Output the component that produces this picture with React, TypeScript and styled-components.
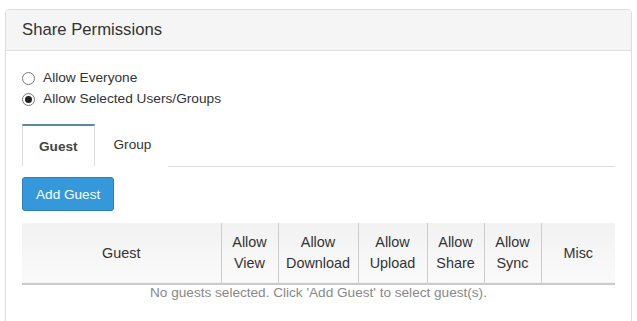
import styled, { createGlobalStyle } from "styled-components";

const GlobalStyle = createGlobalStyle`
  html, body {
    margin: 0;
    padding: 0;
    background: #ffffff;
  }
  body {
    font-family: "Liberation Sans", Arial, sans-serif;
    color: #333333;
  }
`;

const Page = styled.div`
  padding: 9px 5px 0 5px;
`;

const Panel = styled.section`
  border: 1px solid #dddddd;
  border-radius: 4px;
  background: #ffffff;
  box-shadow: 0 1px 1px rgba(0, 0, 0, 0.05);
  min-height: 340px;
`;

const PanelHeader = styled.header`
  height: 40px;
  display: flex;
  align-items: center;
  padding: 0 16px;
  background: #f5f5f5;
  border-bottom: 1px solid #dddddd;
  border-radius: 3px 3px 0 0;
`;

const Title = styled.h3`
  margin: 0;
  font-size: 16.7px;
  font-weight: normal;
  color: #333333;
`;

const PanelBody = styled.div`
  padding: 16px 16px 0 16px;
`;

const RadioGroup = styled.div`
  display: flex;
  flex-direction: column;
`;

const RadioLabel = styled.label`
  display: flex;
  align-items: center;
  gap: 8px;
  height: 21px;
  font-size: 13.7px;
  color: #333333;
  cursor: pointer;
`;

const Radio = styled.input.attrs({ type: "radio" })`
  appearance: none;
  margin: 2px 0 0 0;
  width: 13px;
  height: 13px;
  border: 1px solid #7a7a7a;
  border-radius: 50%;
  background: #ffffff;
  display: grid;
  place-items: center;

  &:checked::after {
    content: "";
    width: 7px;
    height: 7px;
    border-radius: 50%;
    background: #222222;
  }
`;

const TabList = styled.div`
  display: flex;
  margin-top: 15px;
  border-bottom: 1px solid #dddddd;
`;

const Tab = styled.button<{ $active?: boolean }>`
  height: 43px;
  margin-bottom: -1px;
  padding: 0 16px;
  font-family: inherit;
  font-size: 13.6px;
  font-weight: ${(p) => (p.$active ? "bold" : "normal")};
  color: ${(p) => (p.$active ? "#444444" : "#333333")};
  background: #ffffff;
  border: 1px solid ${(p) => (p.$active ? "#dddddd" : "transparent")};
  border-top: 2px solid ${(p) => (p.$active ? "#5a8a9e" : "transparent")};
  border-bottom-color: ${(p) => (p.$active ? "#ffffff" : "transparent")};
  padding-bottom: ${(p) => (p.$active ? "0" : "4px")};
  padding-left: ${(p) => (p.$active ? "16px" : "18px")};
  cursor: pointer;
`;

const Toolbar = styled.div`
  padding: 10px 0 12px 0;
`;

const Button = styled.button`
  height: 34px;
  padding: 0 13px;
  font-family: inherit;
  font-size: 13.6px;
  color: #ffffff;
  background: #3498db;
  border: 1px solid #2a7fba;
  border-radius: 3px;
  cursor: pointer;
`;

const Table = styled.table`
  width: 593px;
  border-collapse: collapse;
  table-layout: fixed;
`;

const HeadRow = styled.tr`
  background: linear-gradient(to bottom, #f2f2f2, #fafafa);
  border-bottom: 2px solid #cccccc;
`;

const Th = styled.th`
  height: 60px;
  padding: 0;
  font-size: 14.4px;
  font-weight: normal;
  line-height: 21px;
  color: #333333;
  text-align: center;
  border-left: 1px solid #cccccc;

  &:first-child {
    border-left: none;
  }
`;

const EmptyCell = styled.td`
  padding: 0;
  height: 16px;
  line-height: 16px;
  font-size: 13.6px;
  color: #888888;
  text-align: center;
`;

const columns = [
  { label: ["Guest"], width: 199 },
  { label: ["Allow", "View"], width: 57 },
  { label: ["Allow", "Download"], width: 80 },
  { label: ["Allow", "Upload"], width: 69 },
  { label: ["Allow", "Share"], width: 57 },
  { label: ["Allow", "Sync"], width: 57 },
  { label: ["Misc"], width: 74 },
];

export default function App() {
  return (
    <>
      <GlobalStyle />
      <Page>
        <Panel>
          <PanelHeader>
            <Title>Share Permissions</Title>
          </PanelHeader>
          <PanelBody>
            <RadioGroup>
              <RadioLabel>
                <Radio name="share" />
                Allow Everyone
              </RadioLabel>
              <RadioLabel>
                <Radio name="share" defaultChecked />
                Allow Selected Users/Groups
              </RadioLabel>
            </RadioGroup>

            <TabList>
              <Tab $active>Guest</Tab>
              <Tab>Group</Tab>
            </TabList>

            <Toolbar>
              <Button>Add Guest</Button>
            </Toolbar>

            <Table>
              <colgroup>
                {columns.map((c, i) => (
                  <col key={i} style={{ width: c.width }} />
                ))}
              </colgroup>
              <thead>
                <HeadRow>
                  {columns.map((c, i) => (
                    <Th key={i}>
                      {c.label.map((line, j) => (
                        <div key={j}>{line}</div>
                      ))}
                    </Th>
                  ))}
                </HeadRow>
              </thead>
              <tbody>
                <tr>
                  <EmptyCell colSpan={columns.length}>
                    No guests selected. Click 'Add Guest' to select guest(s).
                  </EmptyCell>
                </tr>
              </tbody>
            </Table>
          </PanelBody>
        </Panel>
      </Page>
    </>
  );
}
